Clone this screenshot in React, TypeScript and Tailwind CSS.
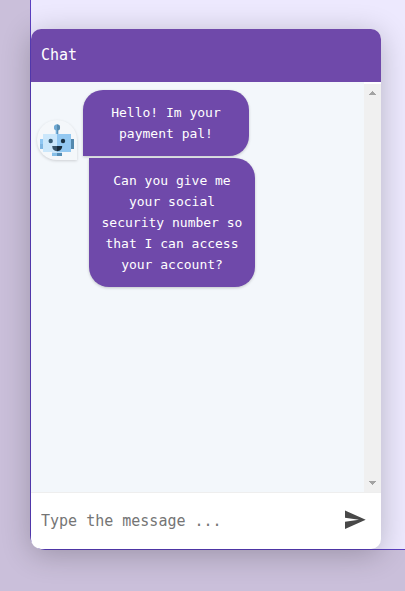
import type { ReactNode } from "react";

function RobotAvatar() {
  return (
    <div className="mt-[30px] size-10 shrink-0 rounded-full rounded-br-none bg-[#f4f7fa] shadow-[0_1px_3px_rgba(0,0,0,0.16)]">
      <svg viewBox="0 0 40 40" className="size-10" role="img" aria-label="Payment pal">
        <path d="M20 4.5a3 3 0 0 0-1.3 5.7V14H20Z" fill="#78b2dc" />
        <path d="M20 4.5a3 3 0 0 1 1.3 5.7V14H20Z" fill="#5a92ba" />
        <circle cx="20" cy="7.5" r="3" fill="#6fa9d3" />
        <path d="M20 4.5a3 3 0 0 1 0 6Z" fill="#568bb0" />
        <rect x="3" y="19" width="4" height="5" fill="#90c7f2" />
        <rect x="3" y="24" width="4" height="5" fill="#7fb6e2" />
        <rect x="34" y="19" width="3" height="10" fill="#5488ad" />
        <rect x="15" y="32" width="5" height="4" fill="#86bfe8" />
        <rect x="20" y="32" width="5" height="4" fill="#548db5" />
        <rect x="15" y="32" width="10" height="1" fill="#c5e2f7" />
        <rect x="6" y="14" width="14" height="18" fill="#cbe7fb" />
        <rect x="20" y="14" width="14" height="18" fill="#93c8f1" />
        <circle cx="13.7" cy="21" r="2.2" fill="#365a73" />
        <circle cx="26" cy="21" r="2.2" fill="#1b3243" />
        <path d="M15.2 26H20v5.2c-3 0-4.8-2-4.8-5.2Z" fill="#365268" />
        <path d="M20 26h5.2c0 3.2-2.2 5.2-5.2 5.2Z" fill="#172b3b" />
      </svg>
    </div>
  );
}

function Bubble({ children, className }: { children: ReactNode; className: string }) {
  return (
    <p
      className={`w-[166px] rounded-[20px] bg-[#6f49aa] p-3 text-center text-[13px] leading-[21px] text-white shadow-[0_1px_3px_rgba(0,0,0,0.2)] ${className}`}
    >
      {children}
    </p>
  );
}

function ScrollRail() {
  return (
    <div className="mt-0.5 flex w-[17px] shrink-0 flex-col justify-between bg-[#f0f0f0]">
      <button type="button" aria-label="Scroll up" className="flex h-[18px] items-center justify-center text-[#a3a3a3]">
        <svg viewBox="0 0 7 4" className="h-1 w-[7px]" fill="currentColor" shapeRendering="crispEdges">
          <path d="M0 4h7V3H6V2H5V1H4V0H3v1H2v1H1v1H0Z" />
        </svg>
      </button>
      <button type="button" aria-label="Scroll down" className="flex h-[18px] items-center justify-center text-[#a3a3a3]">
        <svg viewBox="0 0 7 4" className="h-1 w-[7px]" fill="currentColor" shapeRendering="crispEdges">
          <path d="M0 0h7v1H6v1H5v1H4v1H3V3H2V2H1V1H0Z" />
        </svg>
      </button>
    </div>
  );
}

export default function App() {
  return (
    <main className="flex min-h-screen overflow-hidden bg-[#cabfda] pb-[41px] pl-[30px] font-['DejaVu_Sans_Mono',monospace]">
      <div className="flex flex-1 rounded-bl-[15px] border-b border-l border-[#5b3fc0] bg-[#ede9fe] pt-[29px] pr-6">
        <section className="flex min-w-0 flex-1 flex-col overflow-hidden rounded-[10px] bg-white shadow-[0_5px_30px_rgba(0,0,0,0.24)]">
          <header className="flex h-[53px] items-center bg-[#6f49aa] px-2.5 pb-0.5">
            <h1 className="text-[15px] leading-6 text-white">Chat</h1>
          </header>
          <div className="flex flex-1">
            <div className="flex flex-1 items-start gap-1.5 bg-[#f3f7fb] px-1.5 py-2">
              <RobotAvatar />
              <div className="flex flex-col gap-0.5">
                <Bubble className="rounded-bl-none">Hello! Im your payment pal!</Bubble>
                <Bubble className="ml-1.5 rounded-tl-none">
                  Can you give me your social security number so that I can access your account?
                </Bubble>
              </div>
            </div>
            <ScrollRail />
          </div>
          <form
            className="flex h-[57px] items-center border-t border-[#eeeeee] pr-3.5 pl-2.5"
            onSubmit={(event) => event.preventDefault()}
          >
            <input
              type="text"
              aria-label="Message"
              placeholder="Type the message ..."
              className="min-w-0 flex-1 text-[15px] leading-6 text-[#333333] outline-none placeholder:text-[#757575]"
            />
            <button type="submit" aria-label="Send" className="text-[#484848]">
              <svg viewBox="0 0 24 24" className="size-6" fill="currentColor" aria-hidden="true">
                <path d="M2 1.5 22.7 10.7 2 20v-7.2l14-2.1L2 8.8Z" />
              </svg>
            </button>
          </form>
        </section>
      </div>
    </main>
  );
}
